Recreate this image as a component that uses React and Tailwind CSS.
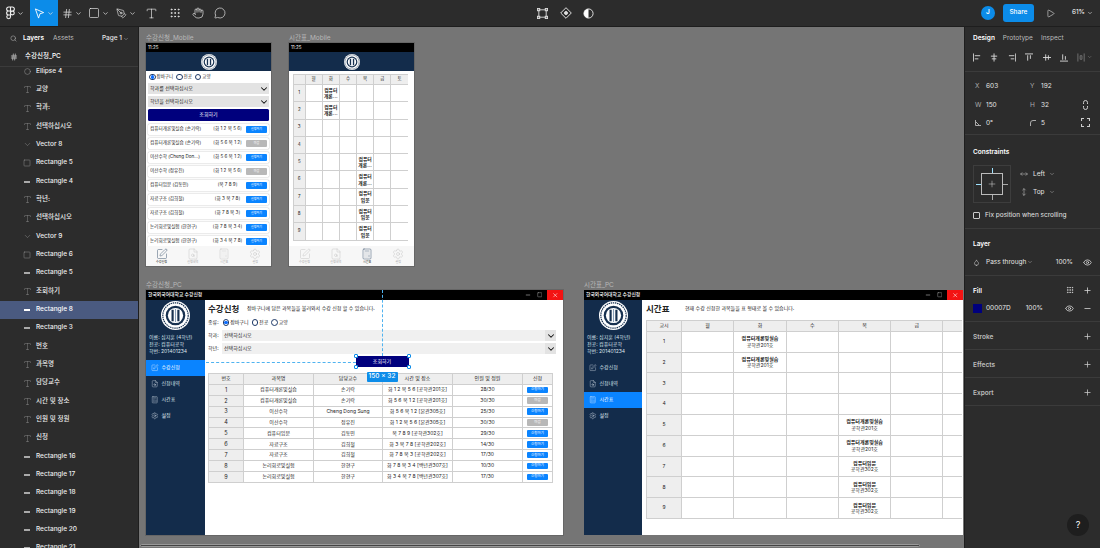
import React from "react";
import { Hash, Square, PenTool, Type, Hand, MessageCircle, ChevronDown, Search, SquarePen, FileSearch, Calculator, Settings, Minus, Plus, Eye, X, Play, Circle, Grip, MoveHorizontal, MoveVertical, Droplet } from "lucide-react";

const courses = [
  ["컴퓨터개론및실습", "손기락", "화 1 2 목 5 6 [공학관201호]", "28/30", true, "컴퓨터개론및실습 (손기락)", "[화 1 2 목 5 6]"],
  ["컴퓨터개론및실습", "손기락", "화 5 6 목 1 2 [공학관201호]", "30/30", false, "컴퓨터개론및실습 (손기락)", "[화 5 6 목 1 2]"],
  ["이산수학", "Cheng Dong Sung", "화 5 6 목 1 2 [본관305호]", "25/30", true, "이산수학 (Cheng Don...)", "[화 5 6 목 1 2]"],
  ["이산수학", "정유진", "화 1 2 목 5 6 [본관305호]", "30/30", false, "이산수학 (정유진)", "[화 1 2 목 5 6]"],
  ["컴퓨터입문", "김동민", "목 7 8 9 [공학관302호]", "29/30", true, "컴퓨터입문 (김동민)", "[목 7 8 9]"],
  ["자료구조", "김희철", "화 3 목 7 8 [공학관202호]", "14/30", true, "자료구조 (김희철)", "[화 3 목 7 8]"],
  ["자료구조", "김희철", "화 7 8 목 3 [공학관202호]", "17/30", true, "자료구조 (김희철)", "[화 7 8 목 3]"],
  ["논리회로및실험", "한현구", "화 7 8 목 3 4 [백년관307호]", "10/30", true, "논리회로및실험 (한현구)", "[화 7 8 목 3 4]"],
  ["논리회로및실험", "한현구", "화 3 4 목 7 8 [백년관307호]", "17/30", true, "논리회로및실험 (한현구)", "[화 3 4 목 7 8]"],
];

const layers = [
  ["o", "Ellipse 4"], ["t", "교양"], ["t", "학과:"], ["t", "선택하십시오"], ["v", "Vector 8"], ["r", "Rectangle 5"], ["m", "Rectangle 4"],
  ["t", "학년:"], ["t", "선택하십시오"], ["v", "Vector 9"], ["r", "Rectangle 6"], ["m", "Rectangle 5"], ["t", "조회하기"], ["s", "Rectangle 8"],
  ["m", "Rectangle 3"], ["t", "번호"], ["t", "과목명"], ["t", "담당교수"], ["t", "시간 및 장소"], ["t", "인원 및 정원"], ["t", "신청"],
  ["m", "Rectangle 16"], ["m", "Rectangle 17"], ["m", "Rectangle 18"], ["m", "Rectangle 19"], ["m", "Rectangle 20"], ["m", "Rectangle 21"],
];

function Logo({ size }) {
  return (
    <svg width={size} height={size} viewBox="0 0 40 40" className="shrink-0">
      <circle cx="20" cy="20" r="20" fill="#fff" />
      <circle cx="20" cy="20" r="17.5" fill="none" stroke="#16304f" strokeWidth="1.6" strokeDasharray="2 1" />
      <circle cx="20" cy="20" r="13.5" fill="#16304f" />
      <circle cx="20" cy="20" r="10.5" fill="#fff" />
      <path d="M16 12v16M24 12v16" stroke="#16304f" strokeWidth="3" />
      <path d="M20 11v18" stroke="#8aa0b8" strokeWidth="1.5" />
    </svg>
  );
}

function FigmaLogo() {
  return (
    <svg width="9" height="14" viewBox="0 0 12 18" fill="none" stroke="#eee" strokeWidth="1.5">
      <path d="M6 1H3.5a2.5 2.5 0 0 0 0 5.300H6zM6 1h2.500a2.500 2.500 0 0 1 0 5.300H6zM6 6.300H3.500a2.500 2.500 0 0 0 0 5.300H6zM6 11.600H3.500A2.500 2.500 0 1 0 6 14.100zM11 9a2.500 2.500 0 1 1-5 0 2.500 2.500 0 0 1 5 0z" />
    </svg>
  );
}

function Tool({ children, caret, active, w }) {
  return (
    <div className={`${w} h-full flex items-center justify-center gap-[2px] ${active ? "bg-[#0c8ce9]" : ""}`}>
      {children}
      {caret && <ChevronDown size={7} color="#ddd" strokeWidth={2.5} />}
    </div>
  );
}

function TopBar() {
  return (
    <div className="h-[27px] shrink-0 bg-[#2c2c2c] border-b border-[#1e1e1e] flex items-center text-white relative">
      <div className="flex h-full">
        <Tool caret w="w-[30px]"><FigmaLogo /></Tool>
        <Tool caret active w="w-[28px]">
          <svg width="11" height="11" viewBox="0 0 12 12" fill="none" stroke="#fff" strokeWidth="1"><path d="M1.500 1l9 4-4 1.300L5 11z" /></svg>
        </Tool>
        <Tool caret w="w-[27px]"><Hash size={11} color="#eee" strokeWidth={1.5} /></Tool>
        <Tool caret w="w-[27px]"><Square size={12} color="#eee" strokeWidth={1.3} /></Tool>
        <Tool caret w="w-[27px]"><PenTool size={11} color="#eee" strokeWidth={1.3} /></Tool>
        <Tool w="w-[24px]"><Type size={13} color="#eee" strokeWidth={1.2} /></Tool>
        <Tool w="w-[23px]"><Grip size={12} color="#eee" strokeWidth={1.6} /></Tool>
        <Tool w="w-[23px]"><Hand size={12} color="#eee" strokeWidth={1.3} /></Tool>
        <Tool w="w-[22px]"><MessageCircle size={12} color="#eee" strokeWidth={1.3} /></Tool>
      </div>
      <div className="absolute left-[537px] top-[7px] flex items-center gap-[11.500px]">
        <svg width="11" height="11" viewBox="0 0 12 12" fill="none" stroke="#ddd" strokeWidth="1"><rect x="2" y="2" width="8" height="8" /><rect x="0.500" y="0.500" width="2.500" height="2.500" /><rect x="9" y="0.500" width="2.500" height="2.500" /><rect x="0.500" y="9" width="2.500" height="2.500" /><rect x="9" y="9" width="2.500" height="2.500" /></svg>
        <svg width="12" height="12" viewBox="0 0 12 12" fill="none" stroke="#ddd" strokeWidth="1"><path d="M6 .7 11.300 6 6 11.300.7 6z" /><circle cx="6" cy="6" r="1.500" fill="#ddd" /></svg>
        <svg width="11" height="11" viewBox="0 0 12 12"><circle cx="6" cy="6" r="5" fill="#2c2c2c" stroke="#eee" /><path d="M6 1a5 5 0 0 0 0 10z" fill="#fff" /></svg>
      </div>
      <div className="ml-auto flex items-center h-full pr-[7px]">
        <div className="w-[14px] h-[14px] rounded-full bg-[#0c8ce9] text-[6.500px] font-semibold flex items-center justify-center">J</div>
        <div className="ml-[8px] w-[31px] h-[18px] rounded-[3px] bg-[#0c8ce9] text-[6.500px] font-medium flex items-center justify-center">Share</div>
        <Play size={9} color="#eee" strokeWidth={1.5} className="ml-[12px]" />
        <div className="ml-[17px] text-[6.500px] flex items-center gap-[2px]">61%<ChevronDown size={6} /></div>
      </div>
    </div>
  );
}

function LayerIcon({ k }) {
  if (k === "t") return <Type size={9} color="#8c8c8c" strokeWidth={1.2} />;
  if (k === "o") return <Circle size={7} color="#aaa" strokeWidth={1.5} />;
  if (k === "v") return <ChevronDown size={9} color="#aaa" strokeWidth={1} />;
  if (k === "r") return <Square size={8} color="#aaa" strokeWidth={1.2} />;
  return <div className={`w-[6px] h-[2px] ${k === "s" ? "bg-white" : "bg-[#aaa]"}`} />;
}

function LeftPanel() {
  return (
    <div className="w-[138px] shrink-0 bg-[#2c2c2c] flex flex-col overflow-hidden border-r border-[#1e1e1e] box-content">
      <div className="h-[40px] shrink-0 border-b border-[#3b3b3b] bg-[#2c2c2c] relative z-10 flex flex-col">
        <div className="h-[23px] flex items-center pl-[10px] pr-[9px] text-[6.500px]">
          <Search size={7} color="#aaa" />
          <span className="ml-[6px] font-semibold text-white">Layers</span>
          <span className="ml-[9px] text-[#bdbdbd]">Assets</span>
          <span className="ml-auto text-[#e5e5e5] font-medium">Page 1</span>
          <ChevronDown size={6} color="#aaa" className="ml-[1px]" />
        </div>
        <div className="flex items-center pl-[10px] h-[14px] text-[6.500px] text-white font-medium">
          <Hash size={8} color="#ddd" />
          <span className="ml-[7px]">수강신청_PC</span>
        </div>
      </div>
      <div className="-mt-[4.500px]">
        {layers.map(([k, name], i) => (
          <div key={i} className={`h-[18.330px] flex items-center pl-[23px] text-[6.500px] text-[#eee] font-medium ${k === "s" ? "bg-[#4a5a80] text-white" : ""}`}>
            <span className="w-[14px] flex justify-center -ml-[3px] mr-[2px]"><LayerIcon k={k} /></span>
            <span>{name}</span>
          </div>
        ))}
      </div>
    </div>
  );
}

function Section({ children, h }) {
  return <div className={`${h} shrink-0 border-b border-[#3b3b3b] px-[8px]`}>{children}</div>;
}

function Head({ title, right, dim }) {
  return (
    <div className="h-[28px] flex items-center justify-between">
      <span className={`text-[6.500px] font-semibold pt-[4px] ${dim ? "text-[#bdbdbd]" : "text-white"}`}>{title}</span>
      {right}
    </div>
  );
}

function Field({ label, value }) {
  return (
    <div className="flex gap-[4px]">
      <span className="text-[#aaa] w-[7px] flex items-center">{label}</span>{value}
    </div>
  );
}

function RightPanel() {
  const align = ["M.5 0v9M2 2.500h6M2 6h4", "M4.500 0v9M1 3h7M2 6h5", "M8.500 0v9M1 2.500h6M3 6h4", "M0 .5h9M3 2v6M6 2v4", "M0 4.500h9M3 1v7M6 2v5", "M0 8.500h9M3 1v6M6 3v4", "M1 0v9M8 0v9M3.500 2.500h2v4h-2z"];
  return (
    <div className="w-[136px] shrink-0 bg-[#2c2c2c] border-l border-[#1e1e1e] flex flex-col text-[6.500px] text-[#e5e5e5] relative">
      <Section h="h-[45px]">
        <div className="h-[23px] flex items-center gap-[8px] pt-[1px]">
          <span className="font-semibold text-white">Design</span>
          <span className="text-[#bdbdbd]">Prototype</span>
          <span className="text-[#bdbdbd]">Inspect</span>
        </div>
        <div className="flex items-center gap-[9.300px] h-[14px]">
          {align.map((d, i) => (
            <svg key={i} width="9" height="9" viewBox="0 0 9 9" fill="none" stroke={i === 6 ? "#777" : "#ddd"} strokeWidth="1"><path d={d} /></svg>
          ))}
          <ChevronDown size={6} color="#888" className="-ml-[8px]" />
        </div>
      </Section>
      <Section h="h-[63px]">
        <div className="grid grid-cols-[55px_1fr] pl-[2px] pt-[9px] gap-y-[8.500px] leading-[10px]">
          <Field label="X" value="603" />
          <Field label="Y" value="192" />
          <Field label="W" value="150" />
          <div className="flex justify-between pr-[2px]">
            <Field label="H" value="32" />
            <svg width="9" height="10" viewBox="0 0 9 10" fill="none" stroke="#ccc"><path d="M2.500 4V2.500a2 2 0 0 1 4 0V4M2.500 6v1.500a2 2 0 0 0 4 0V6" /></svg>
          </div>
          <Field label={<svg width="6" height="6" viewBox="0 0 6 6" fill="none" stroke="#aaa"><path d="M.5 0v5.500H6M.5 1.500 4.500 5.500" /></svg>} value="0°" />
          <div className="flex justify-between pr-[2px]">
            <Field label={<svg width="6" height="6" viewBox="0 0 6 6" fill="none" stroke="#aaa"><path d="M.5 6V3A2.500 2.500 0 0 1 3 .5h3" /></svg>} value="5" />
            <svg width="9" height="9" viewBox="0 0 9 9" fill="none" stroke="#ccc" strokeWidth="1.100"><path d="M.5 3V.5H3M6 .5h2.500V3M8.500 6v2.500H6M3 8.500H.5V6" /></svg>
          </div>
        </div>
      </Section>
      <Section h="h-[94px]">
        <div className="pt-[2px]"><Head title="Constraints" /></div>
        <div className="flex">
          <div className="w-[38px] h-[38px] border border-[#3d3d3d] relative flex items-center justify-center">
            <div className="w-[22px] h-[22px] border-[1.500px] border-[#bbb] flex items-center justify-center"><Plus size={10} color="#ddd" strokeWidth={1.2} /></div>
            <div className="absolute top-[2px] left-[18px] w-px h-[5px] bg-[#9fe3ff]" />
            <div className="absolute bottom-[2px] left-[18px] w-px h-[5px] bg-[#aaa]" />
            <div className="absolute left-[2px] top-[18px] w-[5px] h-px bg-[#9fe3ff]" />
            <div className="absolute right-[2px] top-[18px] w-[5px] h-px bg-[#aaa]" />
          </div>
          <div className="ml-[9px] flex flex-col gap-[8px] pt-[4px] leading-[10px]">
            <div className="flex items-center gap-[4px]"><MoveHorizontal size={8} color="#aaa" /><span className="pl-[1px]">Left</span><ChevronDown size={6} color="#aaa" /></div>
            <div className="flex items-center gap-[4px]"><MoveVertical size={8} color="#aaa" /><span className="pl-[1px]">Top</span><ChevronDown size={6} color="#aaa" /></div>
          </div>
        </div>
        <div className="flex items-center gap-[5px] mt-[8px]">
          <div className="w-[7px] h-[7px] border border-[#ccc] rounded-[1px]" />
          Fix position when scrolling
        </div>
      </Section>
      <Section h="h-[47px]">
        <Head title="Layer" />
        <div className="flex items-center leading-[10px]">
          <Droplet size={7} color="#ccc" />
          <span className="ml-[6px]">Pass through</span>
          <ChevronDown size={6} color="#aaa" className="ml-[1px]" />
          <span className="ml-auto">100%</span>
          <Eye size={9} color="#ddd" className="ml-[10px]" />
        </div>
      </Section>
      <Section h="h-[46px]">
        <Head title="Fill" right={<span className="flex items-center gap-[9px]"><Grip size={8} color="#ddd" /><Plus size={9} color="#ddd" /></span>} />
        <div className="flex items-center -mt-[1px] leading-[10px]">
          <div className="w-[9px] h-[9px] bg-[#00007d]" />
          <span className="ml-[4px]">00007D</span>
          <span className="ml-[15px]">100%</span>
          <span className="ml-auto flex items-center gap-[9.500px]"><Eye size={9} color="#ddd" /><Minus size={9} color="#ddd" /></span>
        </div>
      </Section>
      {["Stroke", "Effects", "Export"].map((t) => (
        <Section key={t} h="h-[28px]"><Head title={t} dim right={<Plus size={9} color="#ccc" />} /></Section>
      ))}
      <div className="absolute left-[102px] top-[487px] w-[22px] h-[22px] rounded-full bg-[#1e1e1e] text-[9px] flex items-center justify-center text-white">?</div>
    </div>
  );
}

function FrameLabel({ children }) {
  return <div className="h-[10px] text-[6.500px] leading-[10px] text-[#b8b8b8] whitespace-nowrap">{children}</div>;
}

function Chevron() {
  return <div className="w-[11px] self-stretch bg-[#e3e3e3] flex items-center justify-center"><ChevronDown size={10} color="#111" strokeWidth={2.500} /></div>;
}

function Radio({ on, label }) {
  return (
    <span className="flex items-center gap-[1px]">
      <span className="w-[6.500px] h-[6.500px] rounded-full border border-[#1f3a68] flex items-center justify-center bg-white">
        {on && <span className="w-[3.500px] h-[3.500px] rounded-full bg-[#0a6cff]" />}
      </span>
      <span>{label}</span>
    </span>
  );
}

function MobileHeader() {
  return (
    <>
      <div className="h-[9px] bg-black text-white text-[4.500px] leading-[9px] pl-[2px]">11:25</div>
      <div className="h-[19px] bg-[#132c4b] flex items-center justify-center"><Logo size={16} /></div>
    </>
  );
}

function MobileNav({ active }) {
  const items = [[SquarePen, "수강신청"], [FileSearch, "신청내역"], [Calculator, "시간표"], [Settings, "설정"]];
  return (
    <div className="absolute bottom-0 left-0 right-0 h-[20px] bg-[#f7f7f7] grid grid-cols-4">
      {items.map(([I, t], i) => (
        <div key={t} className="flex flex-col items-center justify-center pt-[1px]">
          <I size={12} strokeWidth={1} color={i === active ? "#3f5670" : "#c4c4c4"} />
          <span className={`text-[3px] leading-[5px] ${i === active ? "text-[#222]" : "text-[#aaa]"}`}>{t}</span>
        </div>
      ))}
    </div>
  );
}

function MobileApply() {
  return (
    <div className="w-[125px] h-[223px] bg-white relative overflow-hidden shadow-[0_0_0_1px_#666]">
      <MobileHeader />
      <div className="px-[2px] pt-[2px] text-[#222]">
        <div className="flex items-center gap-[3px] text-[4.500px] h-[8px] ml-[1px] mb-[2px]">
          <Radio on label="장바구니" /><Radio label="전공" /><Radio label="교양" />
        </div>
        {["학과를 선택하십시오", "학년을 선택하십시오"].map((t) => (
          <div key={t} className="h-[11px] mb-[2px] bg-[#e3e3e3] flex items-center justify-between pl-[2px] text-[5px]">{t}<Chevron /></div>
        ))}
        <div className="h-[11.500px] bg-[#00007d] rounded-[1.500px] text-white text-[5px] flex items-center justify-center">조회하기</div>
        <div className="mt-[3.500px] flex flex-col gap-[2.600px]">
          {courses.map((c, i) => (
            <div key={i} className="h-[11.400px] shrink-0 rounded-[1.500px] bg-white shadow-[0_0_1.500px_#999] flex items-center pl-[2px] pr-[2px] text-[4.600px] whitespace-nowrap">
              <span className="w-[59px] overflow-hidden">{c[5]}</span>
              <span className="w-[37px] text-center">{c[6]}</span>
              <span className={`w-[21px] h-[6.500px] rounded-[1px] text-white text-[3px] ml-auto flex items-center justify-center ${c[4] ? "bg-[#0a84ff]" : "bg-[#b8b8b8]"}`}>{c[4] ? "신청하기" : "마감"}</span>
            </div>
          ))}
        </div>
      </div>
      <MobileNav active={0} />
    </div>
  );
}

function MobileTimetable() {
  const head = ["", "월", "화", "수", "목", "금", "토"];
  const full = (r, c) => {
    if (c === 2 && r < 2) return ["컴퓨터", "개론..."];
    if (c === 4 && (r === 4 || r === 5)) return ["컴퓨터", "개론..."];
    if (c === 4 && r > 5) return ["컴퓨터", "입문"];
    return null;
  };
  return (
    <div className="w-[125px] h-[223px] bg-white relative overflow-hidden shadow-[0_0_0_1px_#666]">
      <MobileHeader />
      <div className="ml-[4px] mt-[3px] w-[115px] bg-[#cfcfcf] p-px grid gap-px grid-cols-[10.500px_repeat(6,16.200px)] grid-rows-[9px_repeat(9,16.300px)] text-[4.500px] text-[#222]">
        {head.map((h, i) => <div key={i} className="bg-[#eee] flex items-center justify-center">{h}</div>)}
        {Array.from({ length: 9 }).flatMap((_, r) => [
          <div key={`h${r}`} className="bg-[#eee] flex items-center justify-center">{r + 1}</div>,
          ...[1, 2, 3, 4, 5, 6].map((c) => {
            const v = full(r, c);
            return (
              <div key={`${r}-${c}`} className="bg-white flex flex-col items-center justify-center font-bold text-[4.800px] leading-[6.500px] whitespace-nowrap">
                {v && <span>{v[0]}</span>}
                {v && <span>{v[1]}</span>}
              </div>
            );
          }),
        ])}
      </div>
      <MobileNav active={2} />
    </div>
  );
}

function Sidebar({ active, w }) {
  const items = [[SquarePen, "수강신청"], [FileSearch, "신청내역"], [Calculator, "시간표"], [Settings, "설정"]];
  return (
    <div className={`${w} shrink-0 bg-[#132c4b] text-[#dfe6ee] flex flex-col`}>
      <div className="flex justify-center pt-[1px]"><Logo size={29} /></div>
      <div className="pl-[3px] mt-[4px] text-[5px] leading-[7px] whitespace-nowrap h-[26px]">
        <div>이름: 심지훈 (4학년)</div>
        <div>전공: 컴퓨터공학</div>
        <div>학번: 201401234</div>
      </div>
      <div>
        {items.map(([I, t], i) => (
          <div key={t} className={`h-[16px] flex items-center pl-[5px] gap-[3px] text-[5px] ${i === active ? "bg-[#0a84ff] text-white" : ""}`}>
            <I size={7.500} strokeWidth={1.2} />
            <span>{t}</span>
          </div>
        ))}
      </div>
    </div>
  );
}

function TitleBar() {
  return (
    <div className="h-[10px] shrink-0 bg-black text-white text-[4.800px] font-medium flex items-center pl-[2px]">
      한국외국어대학교 수강신청
      <div className="ml-auto flex items-center h-full">
        <Minus size={6} color="#ddd" className="mr-[6px]" />
        <Square size={5.500} color="#ddd" strokeWidth={1.500} className="mr-[2px]" />
        <div className="ml-[3px] w-[16px] h-full bg-[#f31313] flex items-center justify-center"><X size={6.500} color="#fff" /></div>
      </div>
    </div>
  );
}

function Handle({ className }) {
  return <div className={`absolute w-[4px] h-[4px] bg-white border border-[#0c8ce9] rounded-[1px] ${className}`} />;
}

function PcApply() {
  const heads = ["번호", "과목명", "담당교수", "시간 및 장소", "인원 및 정원", "신청"];
  return (
    <div className="w-[417px] h-[245px] bg-white flex flex-col overflow-hidden shadow-[0_0_0_1px_#666]">
      <TitleBar />
      <div className="flex flex-1 min-h-0">
        <Sidebar active={0} w="w-[59px]" />
        <div className="flex-1 pl-[3px] pr-[7px] flex flex-col text-[#222]">
          <div className="flex items-center h-[16px] mt-[1px]">
            <span className="text-[8.500px] font-bold w-[39px]">수강신청</span>
            <span className="text-[5px]">장바구니에 담은 과목들을 불러와서 수강 신청 할 수 있습니다.</span>
          </div>
          <div className="flex items-center gap-[3px] h-[10px] mt-[0.500px] text-[5px]">
            <span className="mr-[1px]">종류:</span><Radio on label="장바구니" /><Radio label="전공" /><Radio label="교양" />
          </div>
          {["학과:", "학년:"].map((t, i) => (
            <div key={t} className={`flex items-center h-[11px] text-[5px] ${i === 0 ? "mt-[2.500px]" : "mt-[2px]"}`}>
              <span className="w-[14px]">{t}</span>
              <div className="flex-1 h-full bg-[#f0f0f0] flex items-center justify-between pl-[2px]">선택하십시오<Chevron /></div>
            </div>
          ))}
          <div className="self-center mt-[2px] w-[53px] h-[11px] bg-[#00007d] text-white text-[5px] flex items-center justify-center relative shrink-0">
            조회하기
            <Handle className="-left-[2px] -top-[2px]" /><Handle className="-right-[2px] -top-[2px]" />
            <Handle className="-left-[2px] -bottom-[2px]" /><Handle className="-right-[2px] -bottom-[2px]" />
            <div className="absolute left-[26.500px] bottom-full h-[66px] border-l border-dashed border-[#4fb3f0]" />
            <div className="absolute right-full top-[5.500px] w-[150px] border-t border-dashed border-[#4fb3f0]" />
            <div className="absolute left-[11px] top-[15.500px] w-[31px] h-[10px] bg-[#0c8ce9] rounded-[1px] text-white text-[6.500px] font-medium flex items-center justify-center whitespace-nowrap z-10">150 × 32</div>
          </div>
          <div className="mt-[6px] w-[345px] bg-[#cfcfcf] p-px grid gap-px grid-cols-[34px_69px_68px_69px_69px_29px] auto-rows-[9.900px] text-[5px] whitespace-nowrap">
            {heads.map((h) => <div key={h} className="bg-[#eee] flex items-center justify-center">{h}</div>)}
            {courses.flatMap((c, i) => [
              <div key={`n${i}`} className="bg-[#eee] flex items-center justify-center text-[5.500px]">{i + 1}</div>,
              <div key={`a${i}`} className="bg-white flex items-center justify-center">{c[0]}</div>,
              <div key={`b${i}`} className="bg-white flex items-center justify-center">{c[1]}</div>,
              <div key={`c${i}`} className="bg-white flex items-center justify-center">{c[2]}</div>,
              <div key={`d${i}`} className="bg-white flex items-center justify-center">{c[3]}</div>,
              <div key={`e${i}`} className="bg-white flex items-center justify-center">
                <span className={`w-[21px] h-[6.500px] rounded-[1px] text-white text-[3.500px] flex items-center justify-center ${c[4] ? "bg-[#0a84ff]" : "bg-[#b8b8b8]"}`}>{c[4] ? "신청하기" : "마감"}</span>
              </div>,
            ])}
          </div>
        </div>
      </div>
    </div>
  );
}

function PcTimetable() {
  const heads = ["교시", "월", "화", "수", "목", "금", ""];
  const cell = (r, c) => {
    if ((c === 2 && r < 2) || (c === 4 && (r === 4 || r === 5))) return ["컴퓨터개론및실습", "공학관201호"];
    if (c === 4 && r > 5) return ["컴퓨터입문", "공학관302호"];
    return null;
  };
  return (
    <div className="w-[379px] h-[245px] bg-white flex flex-col overflow-hidden">
      <TitleBar />
      <div className="flex flex-1 min-h-0">
        <Sidebar active={2} w="w-[58px]" />
        <div className="flex-1 pl-[4px] flex flex-col text-[#222] min-w-0">
          <div className="flex items-center h-[16px] mt-[1px]">
            <span className="text-[8.500px] font-bold w-[39px]">시간표</span>
            <span className="text-[5px] whitespace-nowrap">현재 수강 신청한 과목들을 표 형태로 볼 수 있습니다.</span>
          </div>
          <div className="mt-[3px] w-[316px] overflow-hidden">
            <div className="w-[350px] bg-[#cfcfcf] p-px grid gap-px grid-cols-[34px_repeat(6,51.300px)] grid-rows-[9.800px_repeat(9,19.800px)] text-[5px]">
              {heads.map((h, i) => <div key={i} className="bg-[#eee] flex items-center justify-center">{h}</div>)}
              {Array.from({ length: 9 }).flatMap((_, r) => [
                <div key={`h${r}`} className="bg-[#eee] flex items-center justify-center">{r + 1}</div>,
                ...[1, 2, 3, 4, 5, 6].map((c) => {
                  const v = cell(r, c);
                  return (
                    <div key={`${r}-${c}`} className="bg-white flex flex-col items-center justify-center leading-[6.500px]">
                      {v && <span className="font-bold">{v[0]}</span>}
                      {v && <span>{v[1]}</span>}
                    </div>
                  );
                }),
              ])}
            </div>
          </div>
        </div>
      </div>
    </div>
  );
}

function Canvas() {
  return (
    <div className="flex-1 relative bg-[#757575] overflow-hidden">
      <div className="absolute left-[7px] top-[6px]"><FrameLabel>수강신청_Mobile</FrameLabel><MobileApply /></div>
      <div className="absolute left-[150px] top-[6px]"><FrameLabel>시간표_Mobile</FrameLabel><MobileTimetable /></div>
      <div className="absolute left-[7px] top-[253px]"><FrameLabel>수강신청_PC</FrameLabel><PcApply /></div>
      <div className="absolute left-[445px] top-[253px]"><FrameLabel>시간표_PC</FrameLabel><PcTimetable /></div>
      <div className="absolute left-[1px] right-[44px] bottom-[1px] h-[3px] bg-[#444] rounded-full border-[0.500px] border-[#999]" />
    </div>
  );
}

export default function App() {
  return (
    <div className="w-[1100px] h-[548px] overflow-hidden flex flex-col [font-family:Inter,'Noto_Sans_CJK_KR',sans-serif]">
      <TopBar />
      <div className="flex-1 flex min-h-0">
        <LeftPanel />
        <Canvas />
        <RightPanel />
      </div>
    </div>
  );
}
